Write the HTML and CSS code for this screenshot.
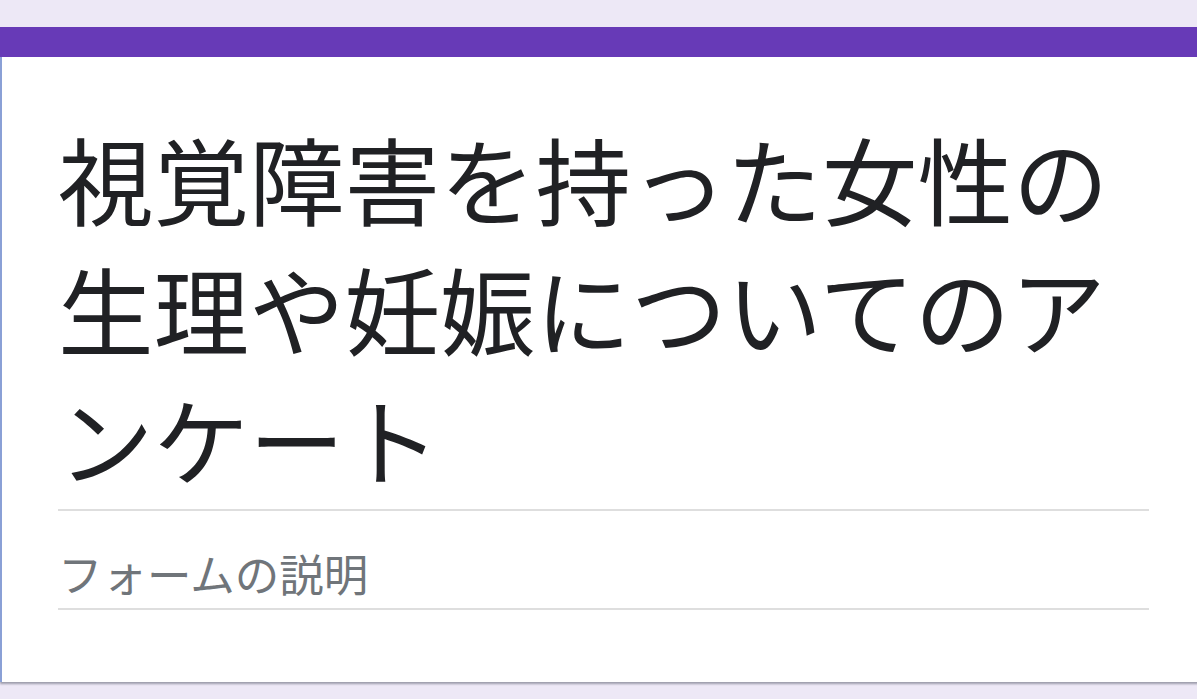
FILE: index.html
```html
<!DOCTYPE html>
<html lang="ja">
<head>
<meta charset="utf-8">
<title>視覚障害を持った女性の生理や妊娠についてのアンケート</title>
<link rel="stylesheet" href="styles.css">
</head>
<body>
<div class="page">
  <div class="card">
    <div class="card-accent"></div>
    <div class="card-body">
      <div class="form-title">視覚障害を持った女性の生理や妊娠についてのアンケート</div>
      <div class="form-desc">フォームの説明</div>
    </div>
  </div>
</div>
</body>
</html>
```

FILE: styles.css
```css
html, body {
  margin: 0;
  padding: 0;
}
body {
  background: #ede8f6;
  overflow: hidden;
  font-family: "Noto Sans CJK JP", "Noto Sans", sans-serif;
}
.page {
  width: 1197px;
  height: 699px;
  overflow: hidden;
  padding-top: 27px;
  box-sizing: border-box;
}
.card {
  width: 1207px;
  background: #ffffff;
  box-shadow: 0 2px 2px rgba(60, 64, 80, 0.45);
}
.card-accent {
  height: 30px;
  background: #673ab7;
}
.card-body {
  border-left: 2px solid #8aa0d6;
  padding: 56px 58px 72px 56px;
}
.form-title {
  font-size: 95.5px;
  line-height: 130px;
  font-weight: 400;
  color: #202124;
  padding-bottom: 6px;
  border-bottom: 2px solid #dedede;
}
.form-desc {
  margin-top: 32px;
  font-size: 44.5px;
  line-height: 60px;
  color: #70757a;
  padding-bottom: 5px;
  border-bottom: 2px solid #dedede;
}
```
